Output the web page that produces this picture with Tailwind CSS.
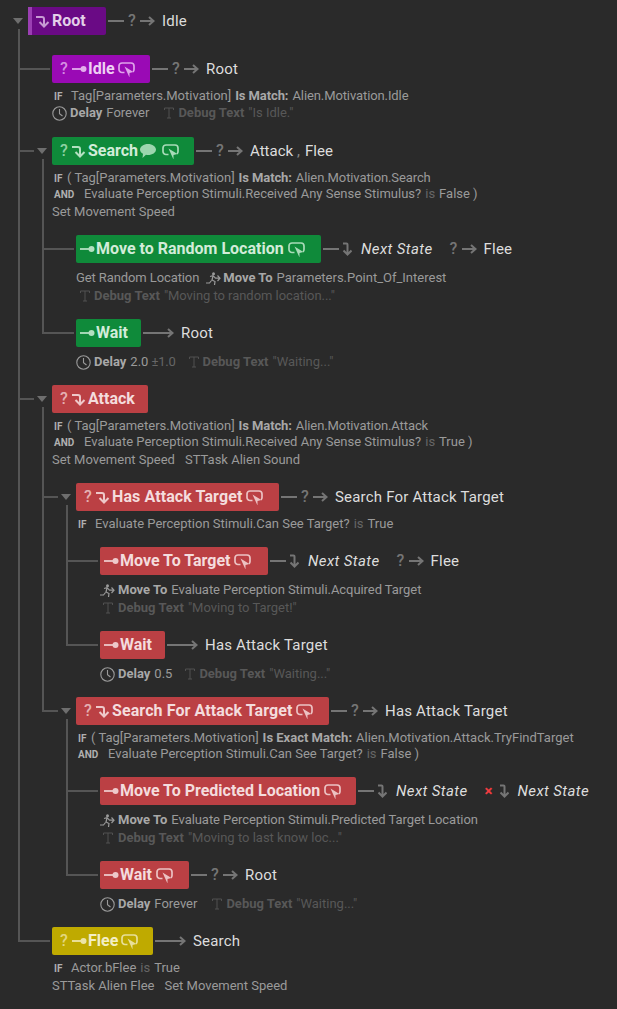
<!DOCTYPE html>
<html lang="en">
<head>
  <meta charset="utf-8" />
  <title>State Tree</title>
  <script src="https://cdn.jsdelivr.net/npm/@tailwindcss/browser@4"></script>
</head>
<body class="bg-[#2a2a2a] font-['Roboto',sans-serif] text-[13px] text-[#9a9a9a]">

<!-- icon sprite -->
<svg width="0" height="0" class="absolute">
  <symbol id="enter" viewBox="0 0 16 14"><path d="M0 3h6a2 2 0 0 1 2 2v7.500M3.500 8l4.500 4.500L12.500 8" fill="none" stroke="currentColor" stroke-width="2"/></symbol>
  <symbol id="task" viewBox="0 0 16 14"><path d="M0 7h10" stroke="currentColor" stroke-width="1.800"/><circle cx="11.500" cy="7" r="3" fill="currentColor"/></symbol>
  <symbol id="loop" viewBox="0 0 17 15"><path d="M6.500 10.500H4a3 3 0 0 1-3-3V4a3 3 0 0 1 3-3h9a3 3 0 0 1 3 3v3.500a3 3 0 0 1-1 2.300" fill="none" stroke="currentColor" stroke-width="1.700"/><path d="M6.500 4.500l9 5.500-4 1V15.500z" fill="currentColor"/></symbol>
  <symbol id="chat" viewBox="0 0 16 14"><path d="M8 0c4.400 0 8 2.500 8 5.500S12.400 11 8 11c-.7 0-1.400-.1-2-.2L2.500 14l.5-4.200C1.200 8.800 0 7.300 0 5.500 0 2.500 3.600 0 8 0z" fill="currentColor"/></symbol>
  <symbol id="arrow" viewBox="0 0 15 10"><path d="M0 5h13M9 1l4.500 4L9 9" fill="none" stroke="currentColor" stroke-width="2"/></symbol>
  <symbol id="down" viewBox="0 0 10 14"><path d="M1 1.500h3.500a1 1 0 0 1 1 1V12M1.500 8.500l4 4 4-4" fill="none" stroke="currentColor" stroke-width="2"/></symbol>
  <symbol id="clock" viewBox="0 0 15 15"><circle cx="7.500" cy="7.500" r="6.700" fill="none" stroke="currentColor" stroke-width="1.100"/><path d="M7.500 3v4.700l3 2.300" fill="none" stroke="currentColor" stroke-width="1.100"/></symbol>
  <symbol id="text" viewBox="0 0 10 12"><path d="M.5 3V1h9v2M5 1v10M3 11h4" fill="none" stroke="currentColor" stroke-width=".9"/></symbol>
  <symbol id="run" viewBox="0 0 15 13"><circle cx="7.500" cy="1.800" r="1.500" fill="currentColor"/><path d="M4 4.500l3-.8 2.500 2.500H14M7 4l-1 4 3 1.500-.5 3.500M5.500 8.500L3.500 11H0M11.500 3.500L14 6.200 11.500 9" fill="none" stroke="currentColor" stroke-width="1.200"/></symbol>
</svg>

<main class="relative h-[1009px] overflow-hidden pt-[7px]">

  <!-- tree connectors and collapse arrows -->
  <svg class="absolute left-0 top-0" width="617" height="1009" fill="none" stroke="#555555" stroke-width="2">
    <path d="M19 29V941H50M19 69H50M19 151H34M19 399H34"/>
    <path d="M43 159V333H74M43 249H74"/>
    <path d="M43 407V711H58M43 497H58"/>
    <path d="M67 505V645H98M67 561H98"/>
    <path d="M67 719V875H98M67 791H98"/>
    <g fill="#6e6e6e" stroke="none">
      <path d="M13 18h10l-5 6z"/>
      <path d="M37 148h10l-5 6z"/>
      <path d="M37 396h10l-5 6z"/>
      <path d="M61 494h10l-5 6z"/>
      <path d="M61 708h10l-5 6z"/>
    </g>
  </svg>

  <!-- Root -->
  <section class="relative flex h-7 items-center pl-[28px]">
    <div class="flex h-7 w-[78px] items-center rounded-r-[2px] border-l-[4px] border-[#9b3fb3] bg-[#6a0a85] pl-[4px] text-[#e3cfe8]">
      <svg class="h-[14px] w-4 text-[#c79ad3]"><use href="#enter"/></svg>
      <span class="text-[16px] font-bold">Root</span>
    </div>
    <div class="ml-[2px] flex items-center text-[#757575]">
      <span class="h-[2px] w-4 bg-[#757575]"></span><span class="ml-1 w-2 text-[16px] font-medium">?</span><svg class="ml-1 h-[10px] w-[15px]"><use href="#arrow"/></svg>
    </div>
    <span class="ml-[7px] text-[15px] tracking-[0.2px] text-[#dddddd]">Idle</span>
  </section>

  <!-- Idle -->
  <section class="relative mt-[20px] flex h-7 items-center pl-[52px]">
    <div class="flex h-7 w-[98px] items-center rounded-[2px] bg-[#9a0ab5] pl-[8px] text-[#eed0f3]">
      <span class="w-[8px] text-[16px] font-medium text-[#d58fe2]">?</span>
      <svg class="ml-[4px] h-[14px] w-4 text-[#e3aeed]"><use href="#task"/></svg>
      <span class="text-[16px] font-bold">Idle</span>
      <svg class="ml-[3px] h-[15px] w-[17px] text-[#dfa3ea]"><use href="#loop"/></svg>
    </div>
    <div class="ml-[2px] flex items-center text-[#757575]">
      <span class="h-[2px] w-4 bg-[#757575]"></span><span class="ml-1 w-2 text-[16px] font-medium">?</span><svg class="ml-1 h-[10px] w-[15px]"><use href="#arrow"/></svg>
    </div>
    <span class="ml-[7px] text-[15px] tracking-[0.2px] text-[#dddddd]">Root</span>
  </section>
  <div class="relative mt-[5px] flex h-4 items-center pl-[54px]"><b class="w-[17px] text-[10px] text-[#b0b0b0]">IF</b><span>Tag[Parameters.Motivation]</span><b class="ml-1 tracking-[-0.1px] text-[#a8a8a8]">Is Match:</b><span class="ml-1 tracking-[-0.1px]">Alien.Motivation.Idle</span></div>
  <div class="relative mt-[1px] flex h-4 items-center pl-[52px]"><svg class="h-[15px] w-[15px]"><use href="#clock"/></svg><b class="ml-[3px] text-[#a8a8a8]">Delay</b><span class="ml-1">Forever</span><svg class="ml-[15px] h-3 w-[10px] text-[#555555]"><use href="#text"/></svg><b class="ml-[4px] text-[#585858]">Debug Text</b><span class="ml-1 text-[#585858]">"Is Idle."</span></div>

  <!-- Search -->
  <section class="relative mt-[16px] flex h-7 items-center pl-[52px]">
    <div class="flex h-7 w-[142px] items-center rounded-[2px] bg-[#0f8a3a] pl-[8px] text-[#d2ecd9]">
      <span class="w-[8px] text-[16px] font-medium text-[#8fd2a4]">?</span>
      <svg class="ml-[4px] h-[14px] w-4 text-[#b3e0c1]"><use href="#enter"/></svg>
      <span class="text-[16px] font-bold">Search</span>
      <svg class="ml-[2px] h-[14px] w-4 text-[#9cd6ae]"><use href="#chat"/></svg>
      <svg class="ml-[6px] h-[15px] w-[17px] text-[#a8dbb8]"><use href="#loop"/></svg>
    </div>
    <div class="ml-[2px] flex items-center text-[#757575]">
      <span class="h-[2px] w-4 bg-[#757575]"></span><span class="ml-1 w-2 text-[16px] font-medium">?</span><svg class="ml-1 h-[10px] w-[15px]"><use href="#arrow"/></svg>
    </div>
    <span class="ml-[7px] text-[15px] text-[#dddddd]">Attack</span><span class="ml-[4px] text-[15px] text-[#8a8a8a]">,</span><span class="ml-[5px] text-[15px] text-[#dddddd]">Flee</span>
  </section>
  <div class="relative mt-[5px] flex h-4 items-center pl-[54px]"><b class="w-[13px] text-[10px] text-[#b0b0b0]">IF</b><span>( Tag[Parameters.Motivation]</span><b class="ml-1 tracking-[-0.1px] text-[#a8a8a8]">Is Match:</b><span class="ml-1 tracking-[-0.1px]">Alien.Motivation.Search</span></div>
  <div class="relative flex h-4 items-center pl-[54px]"><b class="w-[30px] text-[10px] text-[#b0b0b0]">AND</b><span>Evaluate Perception Stimuli.Received Any Sense Stimulus?</span><span class="ml-1 text-[#666666]">is</span><span class="ml-1">False )</span></div>
  <div class="relative mt-[2px] flex h-4 items-center pl-[52px]"><span>Set Movement Speed</span></div>

  <!-- Move to Random Location -->
  <section class="relative mt-[15px] flex h-7 items-center pl-[76px]">
    <div class="flex h-7 w-[245px] items-center rounded-[2px] bg-[#0f8a3a] pl-[4px] text-[#d2ecd9]">
      <svg class="h-[14px] w-4 text-[#b3e0c1]"><use href="#task"/></svg>
      <span class="text-[16px] font-bold">Move to Random Location</span>
      <svg class="ml-[4px] h-[15px] w-[17px] text-[#a8dbb8]"><use href="#loop"/></svg>
    </div>
    <div class="ml-[2px] flex items-center text-[#757575]">
      <span class="h-[2px] w-4 bg-[#757575]"></span><svg class="ml-[3px] h-[14px] w-[10px]"><use href="#down"/></svg>
    </div>
    <span class="ml-[9px] text-[15px] italic tracking-[0.4px] text-[#dddddd]">Next State</span>
    <div class="ml-[17px] flex items-center text-[#757575]"><span class="w-2 text-[16px] font-medium">?</span><svg class="ml-1 h-[10px] w-[15px]"><use href="#arrow"/></svg></div>
    <span class="ml-[7px] text-[15px] tracking-[0.2px] text-[#dddddd]">Flee</span>
  </section>
  <div class="relative mt-[7px] flex h-4 items-center pl-[76px]"><span class="tracking-[-0.1px]">Get Random Location</span><svg class="ml-[7px] h-[13px] w-[15px]"><use href="#run"/></svg><b class="ml-[2px] text-[#a8a8a8]">Move To</b><span class="ml-1">Parameters.Point_Of_Interest</span></div>
  <div class="relative mt-[2px] flex h-4 items-center pl-[80px]"><svg class="h-3 w-[10px] text-[#555555]"><use href="#text"/></svg><b class="ml-[4px] text-[#585858]">Debug Text</b><span class="ml-1 tracking-[-0.05px] text-[#585858]">"Moving to random location..."</span></div>

  <!-- Wait -->
  <section class="relative mt-[15px] flex h-7 items-center pl-[76px]">
    <div class="flex h-7 w-[65px] items-center rounded-[2px] bg-[#0f8a3a] pl-[4px] text-[#d2ecd9]">
      <svg class="h-[14px] w-4 text-[#b3e0c1]"><use href="#task"/></svg>
      <span class="text-[16px] font-bold">Wait</span>
    </div>
    <svg class="ml-[2px] h-[10px] w-[31px] text-[#757575]" viewBox="0 0 31 10"><path d="M0 5h29M25 1l4.500 4-4.500 4" fill="none" stroke="currentColor" stroke-width="2"/></svg>
    <span class="ml-[7px] text-[15px] tracking-[0.2px] text-[#dddddd]">Root</span>
  </section>
  <div class="relative mt-[7px] flex h-4 items-center pl-[76px]"><svg class="h-[15px] w-[15px]"><use href="#clock"/></svg><b class="ml-[3px] text-[#a8a8a8]">Delay</b><span class="ml-1">2.0</span><span class="ml-[3px] tracking-[-0.2px] text-[#666666]">±1.0</span><svg class="ml-[13px] h-3 w-[10px] text-[#555555]"><use href="#text"/></svg><b class="ml-[4px] text-[#585858]">Debug Text</b><span class="ml-1 text-[#585858]">"Waiting..."</span></div>

  <!-- Attack -->
  <section class="relative mt-[15px] flex h-7 items-center pl-[52px]">
    <div class="flex h-7 w-[96px] items-center rounded-[2px] bg-[#bb4044] pl-[8px] text-[#f4dcdd]">
      <span class="w-[8px] text-[16px] font-medium text-[#e5b0b2]">?</span>
      <svg class="ml-[4px] h-[14px] w-4 text-[#eec8c9]"><use href="#enter"/></svg>
      <span class="text-[16px] font-bold">Attack</span>
    </div>
  </section>
  <div class="relative mt-[5px] flex h-4 items-center pl-[54px]"><b class="w-[13px] text-[10px] text-[#b0b0b0]">IF</b><span>( Tag[Parameters.Motivation]</span><b class="ml-1 tracking-[-0.1px] text-[#a8a8a8]">Is Match:</b><span class="ml-1 tracking-[-0.1px]">Alien.Motivation.Attack</span></div>
  <div class="relative flex h-4 items-center pl-[54px]"><b class="w-[30px] text-[10px] text-[#b0b0b0]">AND</b><span>Evaluate Perception Stimuli.Received Any Sense Stimulus?</span><span class="ml-1 text-[#666666]">is</span><span class="ml-1">True )</span></div>
  <div class="relative mt-[2px] flex h-4 items-center pl-[52px]"><span>Set Movement Speed</span><span class="ml-[10px]">STTask Alien Sound</span></div>

  <!-- Has Attack Target -->
  <section class="relative mt-[15px] flex h-7 items-center pl-[76px]">
    <div class="flex h-7 w-[203px] items-center rounded-[2px] bg-[#bb4044] pl-[8px] text-[#f4dcdd]">
      <span class="w-[8px] text-[16px] font-medium text-[#e5b0b2]">?</span>
      <svg class="ml-[4px] h-[14px] w-4 text-[#eec8c9]"><use href="#enter"/></svg>
      <span class="text-[16px] font-bold tracking-[0.1px]">Has Attack Target</span>
      <svg class="ml-[4px] h-[15px] w-[17px] text-[#ecc2c3]"><use href="#loop"/></svg>
    </div>
    <div class="ml-[2px] flex items-center text-[#757575]">
      <span class="h-[2px] w-4 bg-[#757575]"></span><span class="ml-1 w-2 text-[16px] font-medium">?</span><svg class="ml-1 h-[10px] w-[15px]"><use href="#arrow"/></svg>
    </div>
    <span class="ml-[7px] text-[15px] tracking-[0.2px] text-[#dddddd]">Search For Attack Target</span>
  </section>
  <div class="relative mt-[5px] flex h-4 items-center pl-[78px]"><b class="w-[17px] text-[10px] text-[#b0b0b0]">IF</b><span>Evaluate Perception Stimuli.Can See Target?</span><span class="ml-1 text-[#666666]">is</span><span class="ml-1">True</span></div>

  <!-- Move To Target -->
  <section class="relative mt-[15px] flex h-7 items-center pl-[100px]">
    <div class="flex h-7 w-[168px] items-center rounded-[2px] bg-[#bb4044] pl-[4px] text-[#f4dcdd]">
      <svg class="h-[14px] w-4 text-[#eec8c9]"><use href="#task"/></svg>
      <span class="text-[16px] font-bold">Move To Target</span>
      <svg class="ml-[4px] h-[15px] w-[17px] text-[#ecc2c3]"><use href="#loop"/></svg>
    </div>
    <div class="ml-[2px] flex items-center text-[#757575]">
      <span class="h-[2px] w-4 bg-[#757575]"></span><svg class="ml-[3px] h-[14px] w-[10px]"><use href="#down"/></svg>
    </div>
    <span class="ml-[9px] text-[15px] italic tracking-[0.4px] text-[#dddddd]">Next State</span>
    <div class="ml-[17px] flex items-center text-[#757575]"><span class="w-2 text-[16px] font-medium">?</span><svg class="ml-1 h-[10px] w-[15px]"><use href="#arrow"/></svg></div>
    <span class="ml-[7px] text-[15px] tracking-[0.2px] text-[#dddddd]">Flee</span>
  </section>
  <div class="relative mt-[7px] flex h-4 items-center pl-[100px]"><svg class="h-[13px] w-[15px]"><use href="#run"/></svg><b class="ml-[3px] text-[#a8a8a8]">Move To</b><span class="ml-1 tracking-[-0.06px]">Evaluate Perception Stimuli.Acquired Target</span></div>
  <div class="relative mt-[2px] flex h-4 items-center pl-[103px]"><svg class="h-3 w-[10px] text-[#555555]"><use href="#text"/></svg><b class="ml-[5px] text-[#585858]">Debug Text</b><span class="ml-1 text-[#585858]">"Moving to Target!"</span></div>

  <!-- Wait -->
  <section class="relative mt-[15px] flex h-7 items-center pl-[100px]">
    <div class="flex h-7 w-[65px] items-center rounded-[2px] bg-[#bb4044] pl-[4px] text-[#f4dcdd]">
      <svg class="h-[14px] w-4 text-[#eec8c9]"><use href="#task"/></svg>
      <span class="text-[16px] font-bold">Wait</span>
    </div>
    <svg class="ml-[2px] h-[10px] w-[31px] text-[#757575]" viewBox="0 0 31 10"><path d="M0 5h29M25 1l4.500 4-4.500 4" fill="none" stroke="currentColor" stroke-width="2"/></svg>
    <span class="ml-[7px] text-[15px] tracking-[0.2px] text-[#dddddd]">Has Attack Target</span>
  </section>
  <div class="relative mt-[7px] flex h-4 items-center pl-[100px]"><svg class="h-[15px] w-[15px]"><use href="#clock"/></svg><b class="ml-[3px] text-[#a8a8a8]">Delay</b><span class="ml-1">0.5</span><svg class="ml-[13px] h-3 w-[10px] text-[#555555]"><use href="#text"/></svg><b class="ml-[4px] text-[#585858]">Debug Text</b><span class="ml-1 text-[#585858]">"Waiting..."</span></div>

  <!-- Search For Attack Target -->
  <section class="relative mt-[15px] flex h-7 items-center pl-[76px]">
    <div class="flex h-7 w-[253px] items-center rounded-[2px] bg-[#bb4044] pl-[8px] text-[#f4dcdd]">
      <span class="w-[8px] text-[16px] font-medium text-[#e5b0b2]">?</span>
      <svg class="ml-[4px] h-[14px] w-4 text-[#eec8c9]"><use href="#enter"/></svg>
      <span class="text-[16px] font-bold tracking-[0.1px]">Search For Attack Target</span>
      <svg class="ml-[3px] h-[15px] w-[17px] text-[#ecc2c3]"><use href="#loop"/></svg>
    </div>
    <div class="ml-[2px] flex items-center text-[#757575]">
      <span class="h-[2px] w-4 bg-[#757575]"></span><span class="ml-1 w-2 text-[16px] font-medium">?</span><svg class="ml-1 h-[10px] w-[15px]"><use href="#arrow"/></svg>
    </div>
    <span class="ml-[7px] text-[15px] tracking-[0.2px] text-[#dddddd]">Has Attack Target</span>
  </section>
  <div class="relative mt-[5px] flex h-4 items-center pl-[78px]"><b class="w-[13px] text-[10px] text-[#b0b0b0]">IF</b><span>( Tag[Parameters.Motivation]</span><b class="ml-1 text-[#a8a8a8]">Is Exact Match:</b><span class="ml-1">Alien.Motivation.Attack.TryFindTarget</span></div>
  <div class="relative flex h-4 items-center pl-[78px]"><b class="w-[30px] text-[10px] text-[#b0b0b0]">AND</b><span>Evaluate Perception Stimuli.Can See Target?</span><span class="ml-1 text-[#666666]">is</span><span class="ml-1">False )</span></div>

  <!-- Move To Predicted Location -->
  <section class="relative mt-[15px] flex h-7 items-center pl-[100px]">
    <div class="flex h-7 w-[256px] items-center rounded-[2px] bg-[#bb4044] pl-[4px] text-[#f4dcdd]">
      <svg class="h-[14px] w-4 text-[#eec8c9]"><use href="#task"/></svg>
      <span class="text-[16px] font-bold">Move To Predicted Location</span>
      <svg class="ml-[4px] h-[15px] w-[17px] text-[#ecc2c3]"><use href="#loop"/></svg>
    </div>
    <div class="ml-[2px] flex items-center text-[#757575]">
      <span class="h-[2px] w-4 bg-[#757575]"></span><svg class="ml-[3px] h-[14px] w-[10px]"><use href="#down"/></svg>
    </div>
    <span class="ml-[9px] text-[15px] italic tracking-[0.4px] text-[#dddddd]">Next State</span>
    <span class="ml-[17px] text-[15px] font-bold text-[#f03c40]">×</span>
    <svg class="ml-[6px] h-[14px] w-[10px] text-[#757575]"><use href="#down"/></svg>
    <span class="ml-[9px] text-[15px] italic tracking-[0.4px] text-[#dddddd]">Next State</span>
  </section>
  <div class="relative mt-[7px] flex h-4 items-center pl-[100px]"><svg class="h-[13px] w-[15px]"><use href="#run"/></svg><b class="ml-[3px] text-[#a8a8a8]">Move To</b><span class="ml-1 tracking-[-0.06px]">Evaluate Perception Stimuli.Predicted Target Location</span></div>
  <div class="relative mt-[2px] flex h-4 items-center pl-[103px]"><svg class="h-3 w-[10px] text-[#555555]"><use href="#text"/></svg><b class="ml-[5px] text-[#585858]">Debug Text</b><span class="ml-1 text-[#585858]">"Moving to last know loc..."</span></div>

  <!-- Wait -->
  <section class="relative mt-[15px] flex h-7 items-center pl-[100px]">
    <div class="flex h-7 w-[89px] items-center rounded-[2px] bg-[#bb4044] pl-[4px] text-[#f4dcdd]">
      <svg class="h-[14px] w-4 text-[#eec8c9]"><use href="#task"/></svg>
      <span class="text-[16px] font-bold">Wait</span>
      <svg class="ml-[4px] h-[15px] w-[17px] text-[#ecc2c3]"><use href="#loop"/></svg>
    </div>
    <div class="ml-[2px] flex items-center text-[#757575]">
      <span class="h-[2px] w-4 bg-[#757575]"></span><span class="ml-1 w-2 text-[16px] font-medium">?</span><svg class="ml-1 h-[10px] w-[15px]"><use href="#arrow"/></svg>
    </div>
    <span class="ml-[7px] text-[15px] tracking-[0.2px] text-[#dddddd]">Root</span>
  </section>
  <div class="relative mt-[7px] flex h-4 items-center pl-[100px]"><svg class="h-[15px] w-[15px]"><use href="#clock"/></svg><b class="ml-[3px] text-[#a8a8a8]">Delay</b><span class="ml-1">Forever</span><svg class="ml-[15px] h-3 w-[10px] text-[#555555]"><use href="#text"/></svg><b class="ml-[4px] text-[#585858]">Debug Text</b><span class="ml-1 text-[#585858]">"Waiting..."</span></div>

  <!-- Flee -->
  <section class="relative mt-[15px] flex h-7 items-center pl-[52px]">
    <div class="flex h-7 w-[101px] items-center rounded-[2px] bg-[#bfaa00] pl-[8px] text-[#f3eec5]">
      <span class="w-[8px] text-[16px] font-medium text-[#e3d77f]">?</span>
      <svg class="ml-[4px] h-[14px] w-4 text-[#ece4a8]"><use href="#task"/></svg>
      <span class="text-[16px] font-bold">Flee</span>
      <svg class="ml-[3px] h-[15px] w-[17px] text-[#e8df9a]"><use href="#loop"/></svg>
    </div>
    <svg class="ml-[2px] h-[10px] w-[31px] text-[#757575]" viewBox="0 0 31 10"><path d="M0 5h29M25 1l4.500 4-4.500 4" fill="none" stroke="currentColor" stroke-width="2"/></svg>
    <span class="ml-[7px] text-[15px] tracking-[0.2px] text-[#dddddd]">Search</span>
  </section>
  <div class="relative mt-[5px] flex h-4 items-center pl-[54px]"><b class="w-[17px] text-[10px] text-[#b0b0b0]">IF</b><span>Actor.bFlee</span><span class="ml-1 text-[#666666]">is</span><span class="ml-1">True</span></div>
  <div class="relative mt-[2px] flex h-4 items-center pl-[52px]"><span>STTask Alien Flee</span><span class="ml-[10px]">Set Movement Speed</span></div>
</main>

</body>
</html>
